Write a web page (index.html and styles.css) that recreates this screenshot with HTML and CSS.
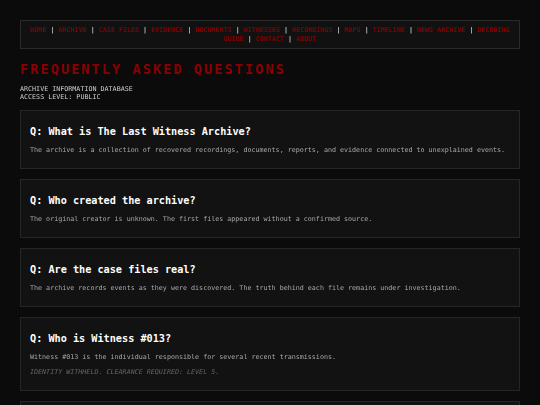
FILE: index.html
```html
<!DOCTYPE html>
<html lang="en">
<head>
  <meta charset="UTF-8">
  <title>FAQ - The Last Witness Archive</title>
  <link rel="stylesheet" href="styles.css">
</head>
<body>

<nav class="nav-bar">
  <div class="nav-text">
    <a href="#">HOME</a> | <a href="#">ARCHIVE</a> | <a href="#">CASE FILES</a> | <a href="#">EVIDENCE</a> | <a href="#">DOCUMENTS</a> | <a href="#">WITNESSES</a> | <a href="#">RECORDINGS</a> | <a href="#">MAPS</a> | <a href="#">TIMELINE</a> | <a href="#">NEWS ARCHIVE</a> | <a href="#">DECODING GUIDE</a> | <a href="#">CONTACT</a> | <a href="#">ABOUT</a>
  </div>
</nav>

<h1 class="page-title">FREQUENTLY ASKED QUESTIONS</h1>

<div class="db-info">
  ARCHIVE INFORMATION DATABASE<br>
  ACCESS LEVEL: PUBLIC
</div>

<div class="faq-list">

  <div class="faq-card">
    <h3>Q: What is The Last Witness Archive?</h3>
    <p>The archive is a collection of recovered recordings, documents, reports, and evidence connected to unexplained events.</p>
  </div>

  <div class="faq-card">
    <h3>Q: Who created the archive?</h3>
    <p>The original creator is unknown. The first files appeared without a confirmed source.</p>
  </div>

  <div class="faq-card">
    <h3>Q: Are the case files real?</h3>
    <p>The archive records events as they were discovered. The truth behind each file remains under investigation.</p>
  </div>

  <div class="faq-card">
    <h3>Q: Who is Witness #013?</h3>
    <p>Witness #013 is the individual responsible for several recent transmissions.</p>
    <p class="redacted">IDENTITY WITHHELD. CLEARANCE REQUIRED: LEVEL 5.</p>
  </div>

  <div class="faq-card">
    <h3>Q: Can I submit information?</h3>
    <p>Yes. Use the contact page to send reports, sightings, or recovered files.</p>
  </div>

</div>

</body>
</html>
```

FILE: styles.css
```css
body {
  margin: 0;
  padding: 20px 20px 0;
  background-color: #0b0b0b;
  color: #cccccc;
  font-family: 'DejaVu Sans Mono', 'Liberation Mono', monospace;
  font-size: 6.7px;
}

.nav-bar {
  display: block;
  padding: 5px 6px 5px;
  background-color: #111111;
  border: 1px solid #2a2a2a;
  text-align: center;
  line-height: 8.5px;
  color: #cccccc;
  font-weight: bold;
}

.nav-bar a {
  color: #8b0000;
  text-decoration: none;
}

.nav-text {
  will-change: transform;
}

.page-title {
  margin: 12px 0 0;
  font-size: 13.5px;
  line-height: 16px;
  letter-spacing: 2.1px;
  color: #8b0000;
  font-weight: bold;
}

.db-info {
  margin-top: 8px;
  line-height: 8px;
  color: #d0d0d0;
  will-change: transform;
}

.faq-list {
  margin-top: 9px;
  display: flex;
  flex-direction: column;
  gap: 10px;
}

.faq-card {
  padding: 14px 9px 13px;
  background-color: #121212;
  border: 1px solid #262626;
}

.faq-card h3 {
  margin: 0 0 7px;
  font-size: 10.2px;
  line-height: 13px;
  color: #ffffff;
  font-weight: bold;
}

.faq-card p {
  margin: 0;
  line-height: 10px;
  color: #a8a8a8;
  will-change: transform;
}

.faq-card .redacted {
  margin-top: 5px;
  font-style: italic;
  color: #666666;
}
```
